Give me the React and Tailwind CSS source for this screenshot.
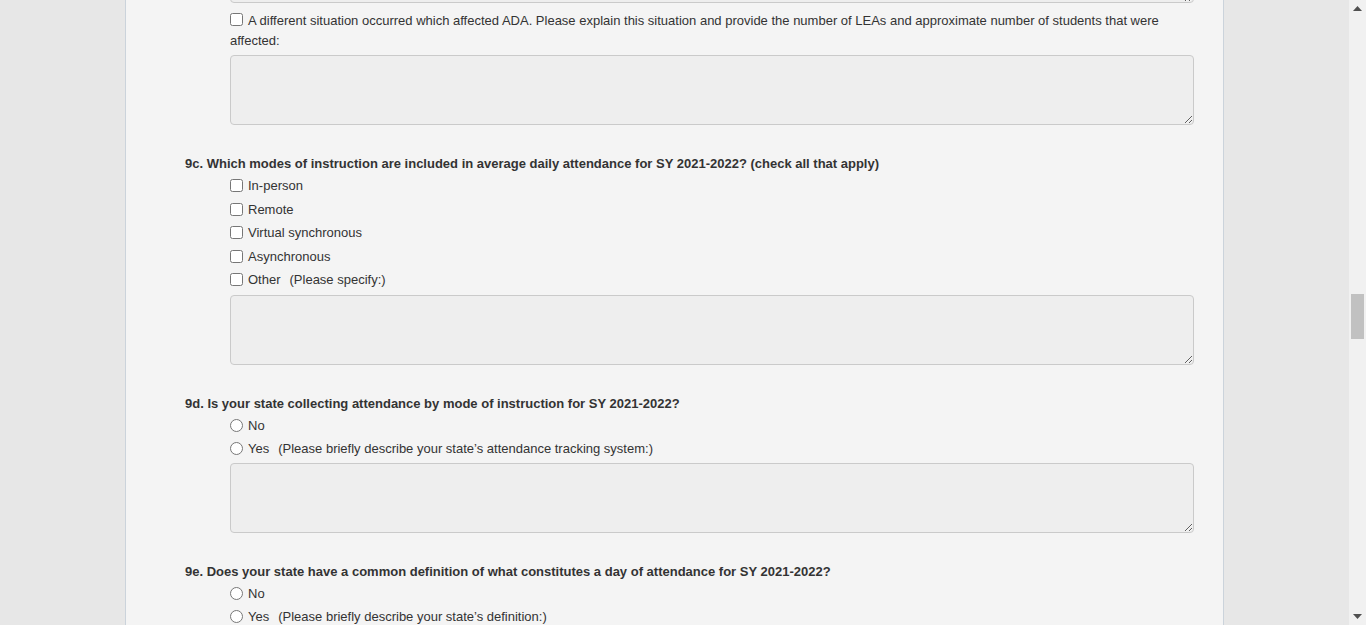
import React from 'react'

const font = { fontFamily: '"Liberation Sans", Arial, sans-serif' }

function Box({ className = '' }) {
  return (
    <textarea
      className={`block w-[964px] h-[70px] bg-[#eeeeee] border border-[#cacaca] rounded-[4px] outline-none ${className}`}
      defaultValue=""
    />
  )
}

function Option({ type = 'checkbox', name, label, note }) {
  return (
    <label className="flex items-center h-[23.5px] pt-[2px]">
      <input type={type} name={name} className="m-0 w-[13px] h-[13px]" />
      <span className="ml-[5px]">{label}</span>
      {note && <span className="ml-[9px]">{note}</span>}
    </label>
  )
}

function Question({ title, children, last }) {
  return (
    <section className={last ? '' : 'mb-[28px]'}>
      <h3 className="pl-[59px] pt-[1px] h-[20px] font-bold leading-[20px]">{title}</h3>
      <div className="pl-[104px]">{children}</div>
    </section>
  )
}

export default function App() {
  return (
    <div className="h-screen w-full flex overflow-hidden bg-[#e7e7e7] text-[13px] text-[#333333]" style={font}>
      <main className="flex-1 flex justify-center overflow-hidden">
        <div className="w-[1099px] bg-[#f4f4f4] border-x border-[#cbd3db]">
          <div className="pl-[104px]">
            <Box className="-mt-[67px]" />
            <p className="mt-[8px] w-[964px] leading-[20px]">
              <input type="checkbox" className="m-0 mr-[5px] w-[13px] h-[13px] align-[-1px]" />
              A different situation occurred which affected ADA. Please explain this situation and provide the number of LEAs and approximate number of students that were affected:
            </p>
            <Box className="mt-[4px]" />
          </div>

          <div className="mt-[28px]">
            <Question title="9c. Which modes of instruction are included in average daily attendance for SY 2021-2022? (check all that apply)">
              <Option label="In-person" />
              <Option label="Remote" />
              <Option label="Virtual synchronous" />
              <Option label="Asynchronous" />
              <Option label="Other" note="(Please specify:)" />
              <Box className="mt-[4px]" />
            </Question>

            <Question title="9d. Is your state collecting attendance by mode of instruction for SY 2021-2022?">
              <Option type="radio" name="q9d" label="No" />
              <Option type="radio" name="q9d" label="Yes" note="(Please briefly describe your state’s attendance tracking system:)" />
              <Box className="mt-[3px]" />
            </Question>

            <Question last title="9e. Does your state have a common definition of what constitutes a day of attendance for SY 2021-2022?">
              <Option type="radio" name="q9e" label="No" />
              <Option type="radio" name="q9e" label="Yes" note="(Please briefly describe your state’s definition:)" />
              <Box className="mt-[3px]" />
            </Question>
          </div>
        </div>
      </main>

      <aside className="w-[17px] bg-[#f1f1f1] flex flex-col items-center">
        <div className="h-[17px] flex items-center justify-center">
          <svg width="9" height="5" viewBox="0 0 9 5"><path d="M4.5 0 9 5H0z" fill="#505050" /></svg>
        </div>
        <div className="flex-1 w-full px-[2px] pt-[277px]">
          <div className="h-[45px] bg-[#c1c1c1]" />
        </div>
        <div className="h-[17px] flex items-center justify-center">
          <svg width="9" height="5" viewBox="0 0 9 5"><path d="M0 0h9L4.5 5z" fill="#505050" /></svg>
        </div>
      </aside>
    </div>
  )
}
